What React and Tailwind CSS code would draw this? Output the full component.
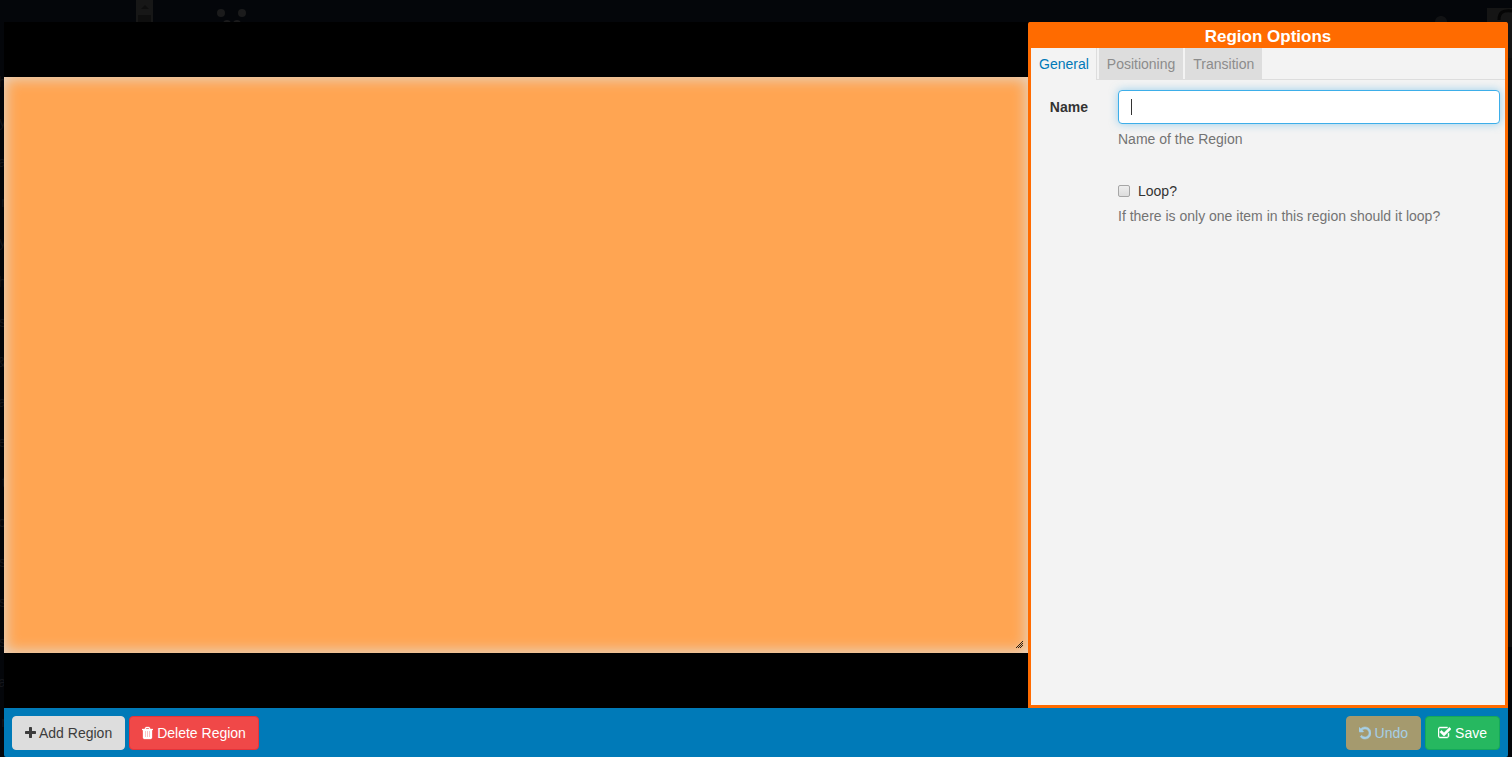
import React from 'react';

const PlusIcon = () => (
  <svg aria-hidden="true" className="h-[14px] w-[11px]" viewBox="192 0 1408 1792" fill="currentColor">
    <path d="M1600 736v192q0 40-28 68t-68 28h-416v416q0 40-28 68t-68 28h-192q-40 0-68-28t-28-68v-416h-416q-40 0-68-28t-28-68v-192q0-40 28-68t68-28h416v-416q0-40 28-68t68-28h192q40 0 68 28t28 68v416h416q40 0 68 28t28 68z" />
  </svg>
);

const TrashIcon = () => (
  <svg aria-hidden="true" className="h-[14px] w-[11px]" viewBox="192 0 1408 1792" fill="currentColor">
    <path fillOpacity="0.55" d="M448 512h896v950h-896z" />
    <path stroke="currentColor" strokeWidth="40" d="M704 1376v-704q0-14-9-23t-23-9h-64q-14 0-23 9t-9 23v704q0 14 9 23t23 9h64q14 0 23-9t9-23zm256 0v-704q0-14-9-23t-23-9h-64q-14 0-23 9t-9 23v704q0 14 9 23t23 9h64q14 0 23-9t9-23zm256 0v-704q0-14-9-23t-23-9h-64q-14 0-23 9t-9 23v704q0 14 9 23t23 9h64q14 0 23-9t9-23zm-544-992h448l-48-117q-7-9-17-11h-317q-10 2-17 11zm928 32v64q0 14-9 23t-23 9h-96v948q0 83-47 143.500t-113 60.500h-832q-66 0-113-58.500t-47-141.500v-952h-96q-14 0-23-9t-9-23v-64q0-14 9-23t23-9h309l70-167q15-37 54-63t79-26h320q40 0 79 26t54 63l70 167h309q14 0 23 9t9 23z" />
  </svg>
);

const UndoIcon = () => (
  <svg aria-hidden="true" className="h-[14px] w-[12px]" viewBox="128 0 1536 1792" fill="currentColor">
    <path stroke="currentColor" strokeWidth="70" d="M1664 896q0 156-61 298t-164 245-245 164-298 61q-172 0-327-72.500t-264-204.500q-7-10-6.500-22.500t8.500-20.500l137-138q10-9 25-9 16 2 23 12 73 95 179 147t225 52q104 0 198.500-40.500t163.500-109.500 109.500-163.500 40.500-198.500-40.500-198.500-109.500-163.500-163.500-109.500-198.500-40.500q-98 0-188 35.500t-160 101.500l137 138q31 30 14 69-17 40-59 40h-448q-26 0-45-19t-19-45v-448q0-42 40-59 39-17 69 14l130 129q107-101 244.500-156.500t284.500-55.500q156 0 298 61t245 164 164 245 61 298z" />
  </svg>
);

const CheckIcon = () => (
  <svg aria-hidden="true" className="h-[14px] w-[13px]" viewBox="64 0 1664 1792" fill="currentColor">
    <path stroke="currentColor" strokeWidth="60" d="M1472 930v318q0 119-84.500 203.500t-203.500 84.500h-832q-119 0-203.500-84.500t-84.500-203.500v-832q0-119 84.500-203.500t203.500-84.500h832q63 0 117 25 15 7 18 23 3 17-9 29l-49 49q-10 10-23 10-3 0-9-2-23-6-45-6h-832q-66 0-113 47t-47 113v832q0 66 47 113t113 47h832q66 0 113-47t47-113v-254q0-13 9-22l64-64q10-10 23-10 6 0 12 3 20 8 20 29zm231-489l-814 814q-24 24-57 24t-57-24l-430-430q-24-24-24-57t24-57l110-110q24-24 57-24t57 24l263 263 647-647q24-24 57-24t57 24l110 110q24 24 24 57t-24 57z" />
  </svg>
);

const ResizeGrip = () => (
  <svg aria-hidden="true" className="absolute right-[5px] bottom-[5px] h-[7px] w-[7px]" viewBox="0 0 7 7" shapeRendering="crispEdges" fill="#2b2118">
    <path d="M6 0h1v1H6zM5 1h1v1H5zM4 2h1v1H4zM6 2h1v1H6zM3 3h1v1H3zM5 3h1v1H5zM2 4h1v1H2zM4 4h1v1H4zM6 4h1v1H6zM1 5h1v1H1zM3 5h1v1H3zM5 5h1v1H5zM0 6h1v1H0zM2 6h1v1H2zM4 6h1v1H4z" />
  </svg>
);

// last letters of the side menu entries, the rest is off screen
const menuEdge = ['h', 'y', 'a', 'r', 'y', 'h', 's', '&', 'a', 'e', 't', 'o', 's', 's', 's', 'a', 'r'];

// the dimmed page that shows round the edges of the editor
const Backdrop = () => (
  <div aria-hidden="true" className="absolute inset-0 -z-10 overflow-hidden bg-[#04060a]">
    <div className="flex w-[6px] flex-col items-end pt-[62px] leading-10 text-[#15161a]">
      {menuEdge.map((letter, i) => (
        <span key={i}>{letter}</span>
      ))}
    </div>
    <svg className="absolute top-0 left-[136px] h-[22px] w-[112px]" viewBox="0 0 112 22">
      <path fill="#171717" d="M0 0h17v22H0z" />
      <path fill="#0e0e0e" d="M2 15h13v7H2zM5 9l4-4 4 4z" />
      <g fill="#1b1b1c">
        <circle cx="85" cy="13" r="4" />
        <circle cx="106" cy="13" r="4" />
        <circle cx="91" cy="24" r="4" />
        <circle cx="101" cy="24" r="4" />
      </g>
    </svg>
    <svg className="absolute top-0 right-0 h-[757px] w-[80px]" viewBox="0 0 80 757">
      <path fill="#101010" d="M76 58h4v589h-4z" />
      <path fill="#111214" d="M3 22c0-4 3-6 6-6s6 2 6 6z" />
      <path fill="#151515" d="M55 8h25v50H55z" />
      <path fill="none" stroke="#050505" strokeWidth="3" d="M67 20c0-8 4-10 13-9" />
    </svg>
  </div>
);

const tabs = ['General', 'Positioning', 'Transition'];

const Tabs = () => (
  <div role="tablist" className="flex gap-[2px] border-b border-[#dddddd]">
    {tabs.map((tab, i) => (
      <button
        key={tab}
        type="button"
        role="tab"
        aria-selected={i === 0}
        className={
          i === 0
            ? '-mb-px border-r border-[#dddddd] bg-[#f3f3f3] pt-[6px] pr-[7px] pb-[6px] pl-2 text-[#0079b8]'
            : 'bg-[#dddddd] px-2 pt-[6px] pb-[5px] text-[#8c8c8c]'
        }
      >
        {tab}
      </button>
    ))}
  </div>
);

const RegionOptions = () => (
  <aside className="flex flex-1 flex-col rounded-t-[2px] border-[3px] border-t-0 border-[#ff6b00] bg-[#f3f3f3]">
    <h3 className="bg-[#ff6b00] pt-[5px] pb-px text-center text-[17px] leading-5 font-bold text-white">Region Options</h3>
    <Tabs />
    <form className="grid grid-cols-[57px_1fr] gap-x-[30px] pt-[10px] pr-[5px]">
      <label htmlFor="name" className="pt-[7px] text-right font-bold">Name</label>
      <div>
        <div className="relative">
          <input
            id="name"
            type="text"
            autoFocus
            className="block h-[34px] w-full rounded-[4px] border border-[#3daee9] bg-white px-3 caret-transparent shadow-[0_0_8px_rgba(61,174,233,0.5)] outline-none"
          />
          <span className="pointer-events-none absolute top-[9px] left-[13px] h-4 w-px bg-[#333333]" />
        </div>
        <p className="mt-[5px] text-[#737373]">Name of the Region</p>
      </div>
      <div className="col-start-2 pt-[32px]">
        <label className="flex items-center gap-2">
          <input
            type="checkbox"
            className="h-[12px] w-[12px] appearance-none rounded-[2px] border border-[#a6a6a6] bg-linear-to-b from-[#eeeeee] to-[#dddddd]"
          />
          Loop?
        </label>
        <p className="mt-[5px] text-[#737373]">If there is only one item in this region should it loop?</p>
      </div>
    </form>
  </aside>
);

const Toolbar = () => (
  <footer className="flex items-center gap-1 rounded-b-[2px] bg-[#007ab8] px-2 pt-2 pb-[7px]">
    <button type="button" className="flex h-[34px] items-center gap-[3px] rounded-[4px] border border-[#dddddd] bg-[#dddddd] px-3 text-[#3c3c3c]">
      <PlusIcon />
      Add Region
    </button>
    <button type="button" className="flex h-[34px] items-center gap-1 rounded-[4px] border border-[#e5343a] bg-[#f04848] px-3 text-white">
      <TrashIcon />
      Delete Region
    </button>
    <button type="button" disabled className="ml-auto flex h-[34px] items-center gap-1 rounded-[4px] border border-[#a59a6e] bg-[#a59a6e] px-3 text-[#a6cfe6]">
      <UndoIcon />
      Undo
    </button>
    <button type="button" className="flex h-[34px] items-center gap-1 rounded-[4px] border border-[#15a85a] bg-[#26b860] px-3 text-white">
      <CheckIcon />
      Save
    </button>
  </footer>
);

const App = () => {
  return (
    <div className="relative isolate flex min-h-screen flex-col px-1 pt-[22px] font-['Liberation_Sans',Arial,sans-serif] text-[14px] leading-5 text-[#333333]">
      <Backdrop />
      <main className="flex flex-1 bg-black">
        <section className="flex w-[1024px] items-center">
          <div className="relative aspect-video w-full bg-[#ffa552] shadow-[inset_0_0_14px_2px_#e5d5c5]">
            <ResizeGrip />
          </div>
        </section>
        <RegionOptions />
      </main>
      <Toolbar />
    </div>
  );
};

export default App;
